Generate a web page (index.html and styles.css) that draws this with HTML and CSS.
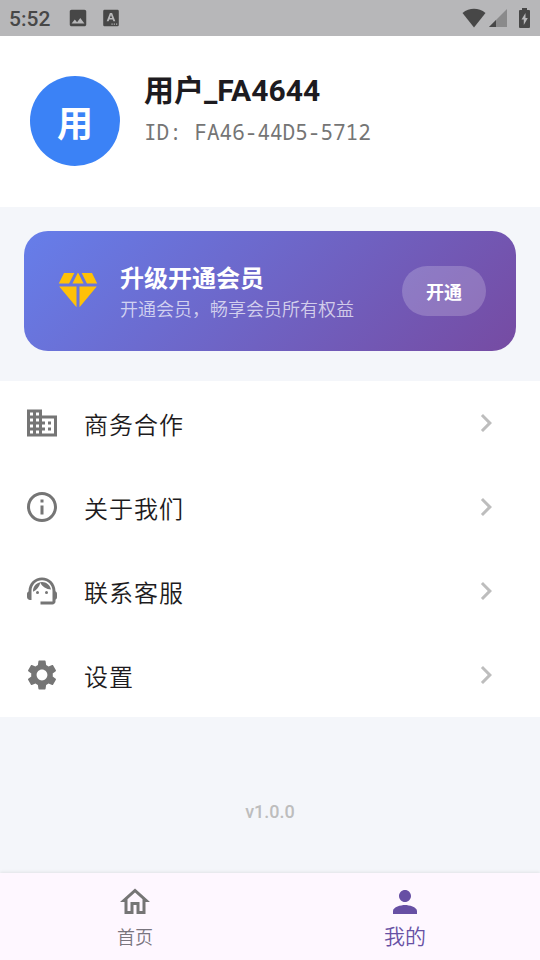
FILE: index.html
```html
<!DOCTYPE html>
<html lang="zh-CN">
<head>
<meta charset="utf-8">
<meta name="viewport" content="width=device-width, initial-scale=1">
<title>我的</title>
<link rel="stylesheet" href="styles.css">
</head>
<body>
<header class="status">
  <span class="clock">5:52</span>
  <svg class="status-icon" viewBox="0 0 24 24"><path d="M21 19V5c0-1.100-.9-2-2-2H5c-1.100 0-2 .9-2 2v14c0 1.100.9 2 2 2h14c1.100 0 2-.9 2-2zM8.500 13.500l2.500 3.010L14.500 12l4.500 6H5l3.500-4.500z"/></svg>
  <svg class="status-icon" viewBox="0 0 24 24"><path fill-rule="evenodd" d="M5 3h14a1.500 1.500 0 0 1 1.500 1.500v15a1.500 1.500 0 0 1-1.500 1.500H5a1.500 1.500 0 0 1-1.500-1.500v-15A1.500 1.500 0 0 1 5 3zM10.800 6.500 7.300 15.500h2.100l.7-2h3.800l.7 2h2.100l-3.500-9zM12 8.700l1.200 3.200h-2.400zM12.500 18v1.300h1.300V18zM15 18v1.300h1.300V18zM17.500 18v1.300h1.300V18z"/></svg>
  <span class="status-right">
    <svg class="wifi" viewBox="0 0 24 20"><path d="M12 19.500 0.500 5C4 2 8 .8 12 .8S20 2 23.500 5z"/></svg>
    <svg class="signal" viewBox="0 0 18 18"><path opacity=".4" d="M18 0v18H0z"/><path d="M7 11v7H0z"/></svg>
    <svg class="battery" viewBox="0 0 11 20"><path fill-rule="evenodd" d="M3 0h5v2h2a1 1 0 0 1 1 1v16a1 1 0 0 1-1 1H1a1 1 0 0 1-1-1V3a1 1 0 0 1 1-1h2zM6.500 5 2.500 11.500h2.300V17l4-7H6.500z"/></svg>
  </span>
</header>
<main class="page">
  <section class="profile">
    <div class="avatar">用</div>
    <div class="identity">
      <h1 class="name">用户_FA4644</h1>
      <p class="uid">ID: FA46-44D5-5712</p>
    </div>
  </section>
  <section class="vip">
    <svg class="gem" viewBox="0 0 24 24"><path d="M12.160 3h-.32L9.210 8.250h5.580zM16.460 8.250h5.160L19 3h-5.160zM21.380 9.750h-8.630V20.100zM11.250 20.100V9.750H2.620zM7.540 8.250 10.160 3H5L2.380 8.250z"/></svg>
    <div class="vip-text">
      <h2 class="vip-title">升级开通会员</h2>
      <p class="vip-note">开通会员，畅享会员所有权益</p>
    </div>
    <button class="vip-button" type="button">开通</button>
  </section>
  <nav class="menu">
    <a class="row" href="#business">
      <svg class="icon" viewBox="0 0 24 24"><path d="M12 7V3H2v18h20V7H12zM6 19H4v-2h2v2zm0-4H4v-2h2v2zm0-4H4V9h2v2zm0-4H4V5h2v2zm4 12H8v-2h2v2zm0-4H8v-2h2v2zm0-4H8V9h2v2zm0-4H8V5h2v2zm10 12h-8v-2h2v-2h-2v-2h2v-2h-2V9h8v10zm-2-8h-2v2h2v-2zm0 4h-2v2h2v-2z"/></svg>
      <span class="label">商务合作</span>
      <svg class="icon chevron" viewBox="0 0 24 24"><path d="M10 6 8.590 7.410 13.170 12l-4.580 4.590L10 18l6-6z"/></svg>
    </a>
    <a class="row" href="#about">
      <svg class="icon" viewBox="0 0 24 24"><path d="M11 7h2v2h-2zm0 4h2v6h-2zm1-9C6.480 2 2 6.480 2 12s4.480 10 10 10 10-4.480 10-10S17.520 2 12 2zm0 18c-4.410 0-8-3.590-8-8s3.590-8 8-8 8 3.590 8 8-3.590 8-8 8z"/></svg>
      <span class="label">关于我们</span>
      <svg class="icon chevron" viewBox="0 0 24 24"><path d="M10 6 8.590 7.410 13.170 12l-4.580 4.590L10 18l6-6z"/></svg>
    </a>
    <a class="row" href="#support">
      <svg class="icon" viewBox="0 0 24 24"><path d="M21 12.220C21 6.730 16.740 3 12 3c-4.690 0-9 3.650-9 9.280-.6.340-1 .980-1 1.720v2c0 1.100.9 2 2 2h1v-6.100c0-3.870 3.130-7 7-7s7 3.130 7 7V19h-8v2h8c1.100 0 2-.9 2-2v-1.220c.590-.310 1-.920 1-1.640v-2.300c0-.7-.410-1.310-1-1.620z"/><circle cx="9" cy="13" r="1"/><circle cx="15" cy="13" r="1"/><path d="M18 11.030C17.520 8.180 15.040 6 12.050 6c-3.030 0-6.290 2.510-6.030 6.450 2.470-1.010 4.330-3.210 4.860-5.890 1.310 2.630 4 4.440 7.120 4.470z"/></svg>
      <span class="label">联系客服</span>
      <svg class="icon chevron" viewBox="0 0 24 24"><path d="M10 6 8.590 7.410 13.170 12l-4.580 4.590L10 18l6-6z"/></svg>
    </a>
    <a class="row" href="#settings">
      <svg class="icon" viewBox="0 0 24 24"><path d="M19.140 12.940c.040-.3.060-.610.060-.940 0-.320-.020-.640-.070-.940l2.030-1.580c.180-.140.230-.410.120-.610l-1.920-3.320c-.120-.220-.370-.290-.590-.220l-2.390.960c-.5-.380-1.030-.7-1.620-.940l-.360-2.540c-.040-.240-.240-.410-.480-.410h-3.840c-.240 0-.430.170-.470.410l-.360 2.540c-.590.240-1.130.570-1.620.940l-2.390-.960c-.220-.080-.470 0-.590.220L2.740 8.870c-.120.210-.080.470.120.610l2.030 1.580c-.050.3-.090.630-.090.940s.020.640.070.940l-2.030 1.580c-.180.140-.230.410-.120.610l1.920 3.320c.120.220.370.290.590.220l2.390-.960c.5.380 1.030.7 1.620.940l.360 2.540c.050.240.240.410.480.410h3.840c.240 0 .440-.170.470-.410l.360-2.540c.590-.240 1.130-.560 1.620-.940l2.390.960c.220.080.470 0 .590-.220l1.920-3.320c.120-.220.070-.470-.120-.610l-2.010-1.580zM12 15.600c-1.980 0-3.600-1.620-3.600-3.600s1.620-3.600 3.600-3.600 3.600 1.620 3.600 3.600-1.620 3.600-3.600 3.600z"/></svg>
      <span class="label">设置</span>
      <svg class="icon chevron" viewBox="0 0 24 24"><path d="M10 6 8.590 7.410 13.170 12l-4.580 4.590L10 18l6-6z"/></svg>
    </a>
  </nav>
  <p class="version">v1.0.0</p>
</main>
<nav class="tabs">
  <a class="tab" href="#home">
    <svg class="icon" viewBox="0 0 24 24"><path d="M12 5.690l5 4.500V18h-2v-6H9v6H7v-7.810l5-4.500M12 3L2 12h3v8h6v-6h2v6h6v-8h3L12 3z"/></svg>
    <span>首页</span>
  </a>
  <a class="tab tab-active" href="#me" aria-current="page">
    <svg class="icon" viewBox="0 0 24 24"><path d="M12 12c2.210 0 4-1.790 4-4s-1.790-4-4-4-4 1.790-4 4 1.790 4 4 4zm0 2c-2.670 0-8 1.340-8 4v2h16v-2c0-2.660-5.330-4-8-4z"/></svg>
    <span>我的</span>
  </a>
</nav>
</body>
</html>
```
FILE: styles.css
```css
* { box-sizing: border-box; margin: 0; }
body {
  min-height: 100vh;
  display: flex;
  flex-direction: column;
  background: #f4f6fa;
  color: #1d1b20;
  font-family: Roboto, "Noto Sans CJK SC", sans-serif;
}
svg { display: block; flex: none; fill: currentColor; }
a { color: inherit; text-decoration: none; }

.status {
  height: 36px;
  display: flex;
  align-items: center;
  padding: 0 10px 0 9px;
  background: #b7b7b9;
  color: #474747;
}
.clock { font-size: 21px; line-height: 24px; font-weight: 500; margin: 2px 17px 0 0; }
.status-icon { width: 22px; height: 22px; margin-right: 11px; }
.status-right { margin-left: auto; display: flex; align-items: center; }
.wifi { width: 24px; height: 20px; margin-right: 3px; }
.signal { width: 18px; height: 18px; margin-right: 12px; }
.battery { width: 11px; height: 20px; }

.page { flex: 1; }
.profile {
  display: flex;
  gap: 24px;
  padding: 36px 30px;
  min-height: 171px;
  background: #fff;
}
.avatar {
  width: 90px;
  height: 90px;
  margin-top: 4px;
  border-radius: 50%;
  background: #3b82f6;
  color: #fff;
  font-size: 36px;
  line-height: 98px;
  font-weight: 700;
  text-align: center;
}
.name { font-size: 30px; line-height: 38px; font-weight: 700; }
.uid {
  margin-top: 8px;
  color: #757575;
  font-family: "Noto Sans Mono", "DejaVu Sans Mono", monospace;
  font-size: 21px;
  line-height: 28px;
}

.vip {
  display: flex;
  align-items: center;
  margin: 24px 24px 30px;
  padding: 24px 30px;
  min-height: 120px;
  border-radius: 24px;
  background: linear-gradient(135deg, #667eea, #764ba2);
  color: #fff;
}
.gem { width: 48px; height: 48px; margin-right: 18px; color: #ffc107; }
.vip-text { flex: 1; padding-top: 6px; }
.vip-title { font-size: 24px; line-height: 32px; font-weight: 700; }
.vip-note { font-size: 18px; line-height: 30px; font-weight: 350; color: rgba(255, 255, 255, .7); }
.vip-button {
  border: 0;
  border-radius: 30px;
  padding: 14px 24px 10px;
  background: rgba(255, 255, 255, .2);
  color: inherit;
  font: 700 18px/26px Roboto, "Noto Sans CJK SC", sans-serif;
}

.menu { background: #fff; }
.row {
  height: 84px;
  display: flex;
  align-items: center;
  padding: 0 36px 0 24px;
}
.icon { width: 36px; height: 36px; color: #757575; }
.label {
  flex: 1;
  margin-left: 24px;
  padding-top: 6px;
  font-size: 24px;
  line-height: 36px;
  font-weight: 350;
  letter-spacing: 1px;
}
.chevron { color: #bdbdbd; }

.version {
  padding: 84px 0 48px;
  color: #bdbdbd;
  font-size: 18px;
  line-height: 22px;
  font-weight: 500;
  text-align: center;
}

.tabs {
  display: flex;
  height: 87px;
  background: #fef7ff;
  box-shadow: 0 -1px 3px rgba(0, 0, 0, .08);
}
.tab {
  flex: 1;
  display: flex;
  flex-direction: column;
  align-items: center;
  padding-top: 11px;
  color: #79747e;
  font-size: 18px;
  line-height: 36px;
  font-weight: 350;
}
.tab-active { font-size: 21px; line-height: 34px; }
.tab-active, .tab-active .icon { color: #6750a4; }
```
